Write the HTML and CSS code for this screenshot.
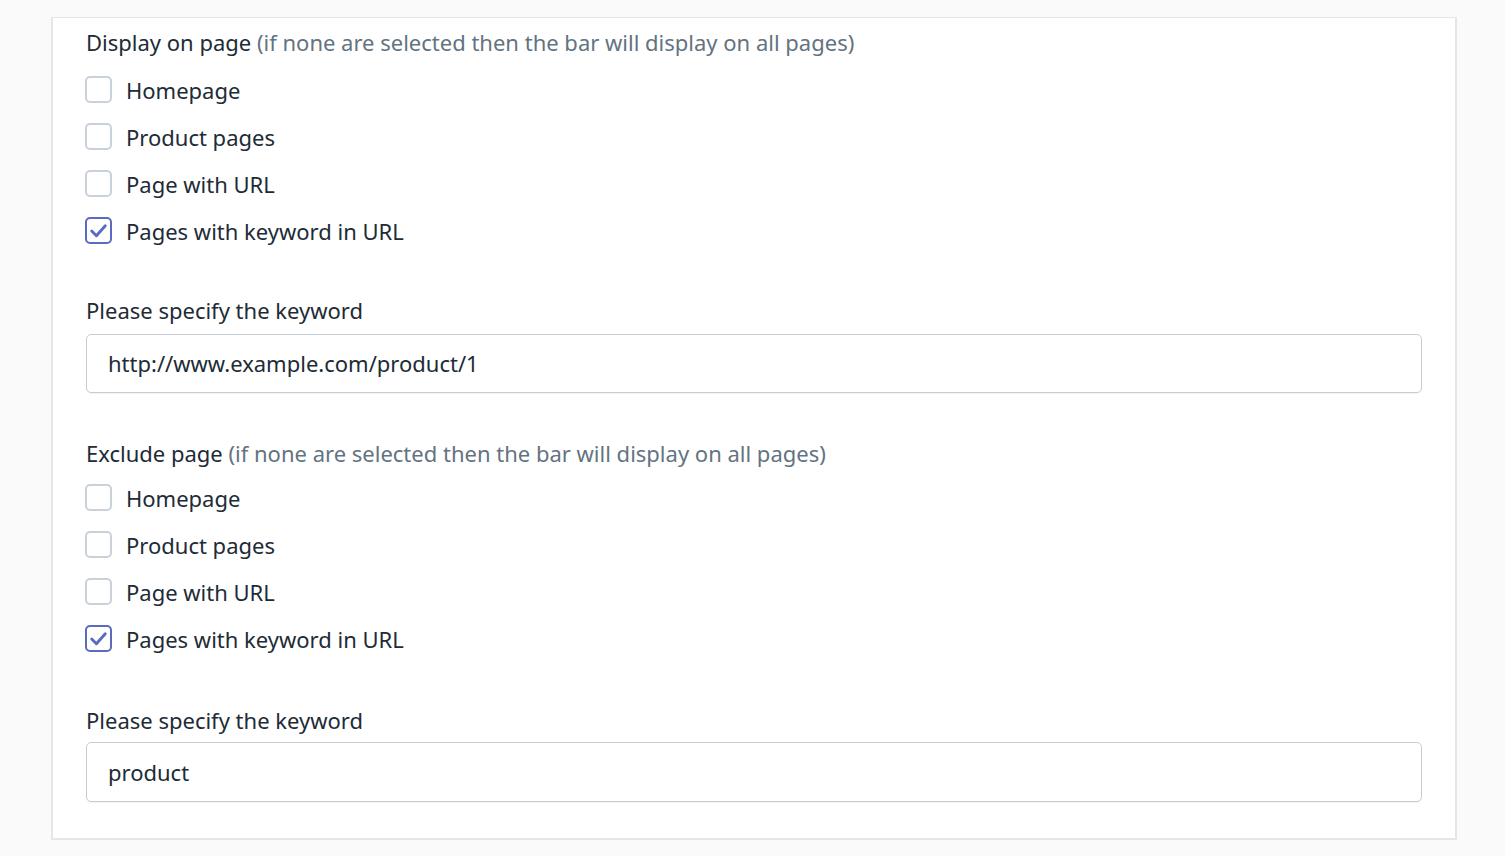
FILE: index.html
```html
<!DOCTYPE html>
<html>
<head>
<meta charset="utf-8">
<link rel="stylesheet" href="styles.css">
</head>
<body>
<div class="card">
  <div class="section">
    <div class="title">Display on page <span class="hint">(if none are selected then the bar will display on all pages)</span></div>
    <label class="option"><span class="box"></span><span>Homepage</span></label>
    <label class="option"><span class="box"></span><span>Product pages</span></label>
    <label class="option"><span class="box"></span><span>Page with URL</span></label>
    <label class="option"><span class="box checked"><svg viewBox="0 0 22 22"><path d="M4.5 11.5l4.5 4.5L17.5 6.5"/></svg></span><span>Pages with keyword in URL</span></label>
    <div class="field-label">Please specify the keyword</div>
    <div class="input">http://www.example.com/product/1</div>
  </div>
  <div class="section second">
    <div class="title">Exclude page <span class="hint">(if none are selected then the bar will display on all pages)</span></div>
    <label class="option"><span class="box"></span><span>Homepage</span></label>
    <label class="option"><span class="box"></span><span>Product pages</span></label>
    <label class="option"><span class="box"></span><span>Page with URL</span></label>
    <label class="option"><span class="box checked"><svg viewBox="0 0 22 22"><path d="M4.5 11.5l4.5 4.5L17.5 6.5"/></svg></span><span>Pages with keyword in URL</span></label>
    <div class="field-label">Please specify the keyword</div>
    <div class="input">product</div>
  </div>
</div>
</body>
</html>
```
FILE: styles.css
```css
* {
  box-sizing: border-box;
}
html, body {
  margin: 0;
  padding: 0;
  background: #fafafa;
}
body {
  font-family: "Noto Sans", "Open Sans", sans-serif;
  font-size: 22px;
  color: #212b36;
  padding: 17px 0 0 51px;
}
.card {
  width: 1406px;
  background: #fff;
  border: 2px solid #e6e6e6;
  border-top-width: 1px;
  padding: 1px 33px 36px 33px;
}
.title {
  height: 47px;
  line-height: 47px;
}
.hint {
  color: #637381;
}
.option {
  display: flex;
  align-items: center;
  gap: 14px;
  height: 47px;
}
.box {
  width: 27px;
  height: 27px;
  border: 2px solid #c9d1da;
  border-radius: 5px;
  display: flex;
  align-items: center;
  justify-content: center;
  flex: none;
  margin-left: -1px;
}
.box.checked {
  border-color: #5c6ac4;
}
.box svg {
  width: 23px;
  height: 23px;
  fill: none;
  stroke: #5c6ac4;
  stroke-width: 2.8;
  stroke-linecap: round;
  stroke-linejoin: round;
}
.field-label {
  margin-top: 36px;
  height: 44px;
  line-height: 40px;
}
.input {
  height: 59px;
  line-height: 57px;
  border: 1px solid #c4cdd5;
  border-radius: 5px;
  padding-left: 21px;
  box-shadow: 0 1px 0 rgba(22, 29, 37, 0.05);
}
.second {
  margin-top: 35px;
}
.second .title {
  height: 46px;
  line-height: 50px;
}
.second .field-label {
  margin-top: 36px;
  line-height: 44px;
}
.second .input {
  height: 60px;
  line-height: 58px;
}
```
